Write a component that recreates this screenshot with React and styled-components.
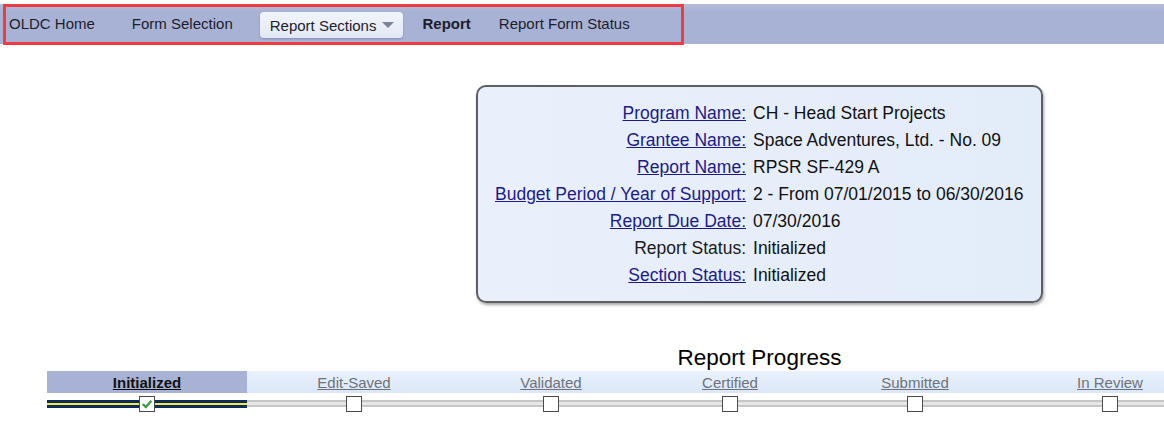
import React from 'react';
import styled, { createGlobalStyle } from 'styled-components';

const GlobalStyle = createGlobalStyle`
  body {
    margin: 0;
    background: #ffffff;
    font-family: 'Liberation Sans', Arial, sans-serif;
    color: #111;
  }
`;

const Page = styled.div`
  width: 1164px;
  height: 437px;
  overflow: hidden;
  padding-top: 4px;
  box-sizing: border-box;
`;

const NavBar = styled.nav`
  height: 40px;
  background: linear-gradient(#b3bcdb, #a8b2d4 20%, #a8b2d4);
  display: flex;
  align-items: stretch;
`;

const NavOutline = styled.div`
  margin-left: 3px;
  height: 41px;
  box-sizing: border-box;
  border: 3px solid #ee3c3f;
  display: flex;
  align-items: center;
  padding: 0 51px 3px 3px;
`;

const NavItem = styled.span`
  font-size: 15px;
  color: #1d1d2b;
  margin-left: ${(p) => p.$gap || 0}px;
  font-weight: ${(p) => (p.$bold ? 'bold' : 'normal')};
  white-space: nowrap;
`;

const DropButton = styled.span`
  display: flex;
  align-items: center;
  gap: 6px;
  margin-left: ${(p) => p.$gap}px;
  height: 26px;
  padding: 0 9px 0 10px;
  font-size: 15px;
  color: #1d1d2b;
  background: linear-gradient(#f1f4fb, #e3e9f5);
  border-radius: 4px;
  box-shadow: 0 1px 2px rgba(60, 70, 110, 0.35);
  margin-top: 4px;
`;

const Caret = styled.span`
  width: 0;
  height: 0;
  border-left: 6px solid transparent;
  border-right: 6px solid transparent;
  border-top: 6px solid #7a8398;
`;

const Summary = styled.section`
  margin: 41px 0 0 476px;
  width: 567px;
  display: flex;
  flex-direction: column;
  align-items: center;
`;

const InfoBox = styled.div`
  width: 567px;
  height: 218px;
  box-sizing: border-box;
  border: 2px solid #5d5f63;
  border-radius: 10px;
  background: linear-gradient(90deg, #e9f0fb, #e3ecf9);
  box-shadow: 1px 2px 3px rgba(0, 0, 0, 0.35);
  padding: 13px 18px 0 17px;
  display: grid;
  grid-template-columns: 1fr auto;
  grid-auto-rows: 27px;
  column-gap: 7px;
  align-items: center;
  font-size: 17.5px;
`;

const Label = styled.span`
  text-align: right;
  white-space: nowrap;
  color: ${(p) => (p.$link ? '#1b1a8a' : '#1a1a1a')};
  text-decoration: ${(p) => (p.$link ? 'underline' : 'none')};
`;

const Value = styled.span`
  white-space: nowrap;
  color: #111;
`;

const Title = styled.h2`
  margin: 41px 0 0;
  font-size: 22.5px;
  font-weight: normal;
  line-height: 27px;
  color: #000;
`;

const Progress = styled.div`
  margin-left: 47px;
  display: grid;
  grid-template-columns: 200px 214px 180px 178px 192px 198px;
  width: 1162px;
`;

const StepLabel = styled.div`
  height: 22px;
  display: flex;
  align-items: center;
  justify-content: center;
  font-size: 15px;
  background: ${(p) => (p.$active ? '#a8b2d4' : 'linear-gradient(#e9f1fc, #dbe7f8)')};
  color: ${(p) => (p.$active ? '#111' : '#6e737b')};
  font-weight: ${(p) => (p.$active ? 'bold' : 'normal')};
  text-decoration: underline;
`;

const Track = styled.div`
  height: 22px;
  display: flex;
  align-items: center;
  justify-content: center;
  background: ${(p) =>
    p.$active
      ? 'linear-gradient(transparent 7px, #0b2c5c 7px, #0b2c5c 10px, #f4ea3c 10px, #f4ea3c 12px, #0b2c5c 12px, #0b2c5c 15px, transparent 15px)'
      : 'linear-gradient(transparent 7px, #c5c5c5 7px, #c5c5c5 9px, #e6e6e6 9px, #e6e6e6 12px, #c5c5c5 12px, #c5c5c5 14px, transparent 14px)'};
`;

const Box = styled.span`
  width: 14px;
  height: 14px;
  border: 1px solid #4a4a4a;
  background: #fff;
  display: flex;
  align-items: center;
  justify-content: center;
`;

const steps = ['Initialized', 'Edit-Saved', 'Validated', 'Certified', 'Submitted', 'In Review'];

const info = [
  ['Program Name:', 'CH - Head Start Projects', true],
  ['Grantee Name:', 'Space Adventures, Ltd. - No. 09', true],
  ['Report Name:', 'RPSR SF-429 A', true],
  ['Budget Period / Year of Support:', '2 - From 07/01/2015 to 06/30/2016', true],
  ['Report Due Date:', '07/30/2016', true],
  ['Report Status:', 'Initialized', false],
  ['Section Status:', 'Initialized', true],
];

export default function App() {
  return (
    <Page>
      <GlobalStyle />
      <NavBar>
        <NavOutline>
          <NavItem>OLDC Home</NavItem>
          <NavItem $gap={37}>Form Selection</NavItem>
          <DropButton $gap={27}>
            Report Sections
            <Caret />
          </DropButton>
          <NavItem $gap={19} $bold>Report</NavItem>
          <NavItem $gap={28}>Report Form Status</NavItem>
        </NavOutline>
      </NavBar>

      <Summary>
        <InfoBox>
          {info.map(([label, value, link]) => (
            <React.Fragment key={label}>
              <Label $link={link}>{label}</Label>
              <Value>{value}</Value>
            </React.Fragment>
          ))}
        </InfoBox>
        <Title>Report Progress</Title>
      </Summary>

      <Progress>
        {steps.map((s, i) => (
          <StepLabel key={s} $active={i === 0}>{s}</StepLabel>
        ))}
        {steps.map((s, i) => (
          <Track key={s} $active={i === 0}>
            <Box>
              {i === 0 && (
                <svg width="12" height="12" viewBox="0 0 12 12">
                  <path d="M1.8 6 L4.8 9 L10.4 2.8" fill="none" stroke="#3c9b43" strokeWidth="2.4" />
                </svg>
              )}
            </Box>
          </Track>
        ))}
      </Progress>
    </Page>
  );
}
